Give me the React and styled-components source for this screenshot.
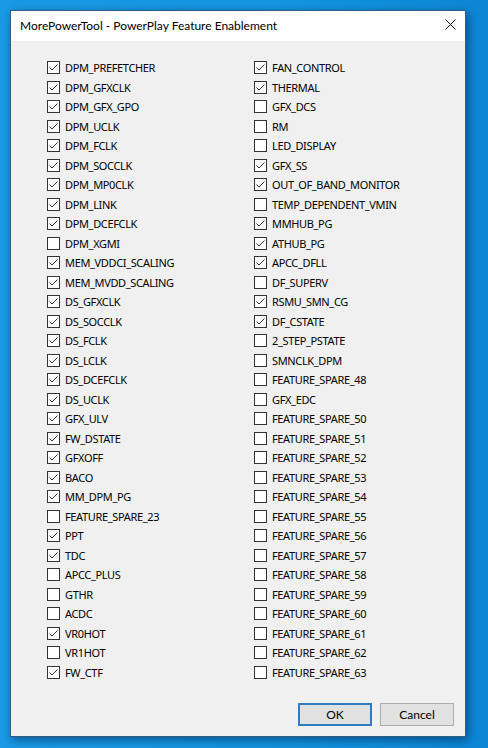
import styled, { createGlobalStyle } from "styled-components";

const GlobalStyle = createGlobalStyle`
  html, body {
    margin: 0;
    padding: 0;
    background: #1395e0;
  }
  body {
    font-family: Lato, "Noto Sans", sans-serif;
    font-size: 12px;
    color: #000;
  }
`;

const Desktop = styled.div`
  width: 488px;
  height: 748px;
  box-sizing: border-box;
  padding: 10px 22px 11px 10px;
  background: linear-gradient(90deg, #1a9ae6 0%, #1395e0 60%, #0d86d4 100%);
`;

const Window = styled.div`
  height: 100%;
  box-sizing: border-box;
  display: flex;
  flex-direction: column;
  border: 1px solid #2c5d84;
  box-shadow: 2px 3px 9px rgba(0, 30, 70, 0.55);
  background: #f0f0f0;
`;

const TitleBar = styled.div`
  height: 30px;
  flex: none;
  display: flex;
  align-items: center;
  justify-content: space-between;
  background: #fff;
  padding: 0 9px 0 9px;
`;

const Title = styled.span`
  font-size: 12px;
  padding-bottom: 1px;
`;

const Close = styled.svg`
  width: 11px;
  height: 11px;
  margin-bottom: 3px;
`;

const Body = styled.div`
  flex: 1;
  display: flex;
  flex-direction: column;
  padding: 17px 11px 10px 36px;
`;

const Grid = styled.div`
  display: grid;
  grid-template-columns: 207px 1fr;
  grid-template-rows: repeat(32, 19.5px);
  grid-auto-flow: column;
`;

const Row = styled.label`
  display: flex;
  align-items: center;
  gap: 5px;
  white-space: nowrap;
  font-family: "Noto Sans", sans-serif;
  font-size: 11px;
  letter-spacing: -0.35px;
`;

const Box = styled.span`
  width: 13px;
  height: 13px;
  box-sizing: border-box;
  border: 1px solid #333;
  background: #fff;
  display: flex;
  align-items: center;
  justify-content: center;
  flex: none;
`;

const Footer = styled.div`
  margin-top: auto;
  display: flex;
  justify-content: flex-end;
  gap: 8px;
`;

const Button = styled.button`
  width: 74px;
  height: 23px;
  box-sizing: border-box;
  font-family: inherit;
  font-size: 12px;
  color: #000;
  background: #e1e1e1;
  border: ${(p) => (p.$primary ? "2px solid #2f7bc4" : "1px solid #adadad")};
  padding: 0;
`;

const left = [
  ["DPM_PREFETCHER", 1], ["DPM_GFXCLK", 1], ["DPM_GFX_GPO", 1], ["DPM_UCLK", 1],
  ["DPM_FCLK", 1], ["DPM_SOCCLK", 1], ["DPM_MP0CLK", 1], ["DPM_LINK", 1],
  ["DPM_DCEFCLK", 1], ["DPM_XGMI", 0], ["MEM_VDDCI_SCALING", 1], ["MEM_MVDD_SCALING", 1],
  ["DS_GFXCLK", 1], ["DS_SOCCLK", 1], ["DS_FCLK", 1], ["DS_LCLK", 1],
  ["DS_DCEFCLK", 1], ["DS_UCLK", 1], ["GFX_ULV", 1], ["FW_DSTATE", 1],
  ["GFXOFF", 1], ["BACO", 1], ["MM_DPM_PG", 1], ["FEATURE_SPARE_23", 0],
  ["PPT", 1], ["TDC", 1], ["APCC_PLUS", 0], ["GTHR", 0],
  ["ACDC", 0], ["VR0HOT", 1], ["VR1HOT", 0], ["FW_CTF", 1],
];

const right = [
  ["FAN_CONTROL", 1], ["THERMAL", 1], ["GFX_DCS", 0], ["RM", 0],
  ["LED_DISPLAY", 0], ["GFX_SS", 1], ["OUT_OF_BAND_MONITOR", 1], ["TEMP_DEPENDENT_VMIN", 0],
  ["MMHUB_PG", 1], ["ATHUB_PG", 1], ["APCC_DFLL", 1], ["DF_SUPERV", 0],
  ["RSMU_SMN_CG", 1], ["DF_CSTATE", 1], ["2_STEP_PSTATE", 0], ["SMNCLK_DPM", 0],
  ["FEATURE_SPARE_48", 0], ["GFX_EDC", 0],
  ...Array.from({ length: 14 }, (_, i) => [`FEATURE_SPARE_${50 + i}`, 0]),
];

function Check({ on }) {
  return (
    <Box>
      {on ? (
        <svg width="11" height="11" viewBox="0 0 11 11">
          <path d="M1.5 5.5 L4 8 L9.5 2.5" fill="none" stroke="#333" strokeWidth="1" />
        </svg>
      ) : null}
    </Box>
  );
}

export default function App() {
  return (
    <>
      <GlobalStyle />
      <Desktop>
        <Window>
          <TitleBar>
            <Title>MorePowerTool - PowerPlay Feature Enablement</Title>
            <Close viewBox="0 0 11 11">
              <path d="M0.5 0.5 L10.5 10.5 M10.5 0.5 L0.5 10.5" stroke="#111" strokeWidth="1" />
            </Close>
          </TitleBar>
          <Body>
            <Grid>
              {[...left, ...right].map(([name, on]) => (
                <Row key={name}>
                  <Check on={on} />
                  {name}
                </Row>
              ))}
            </Grid>
            <Footer>
              <Button $primary>OK</Button>
              <Button>Cancel</Button>
            </Footer>
          </Body>
        </Window>
      </Desktop>
    </>
  );
}
